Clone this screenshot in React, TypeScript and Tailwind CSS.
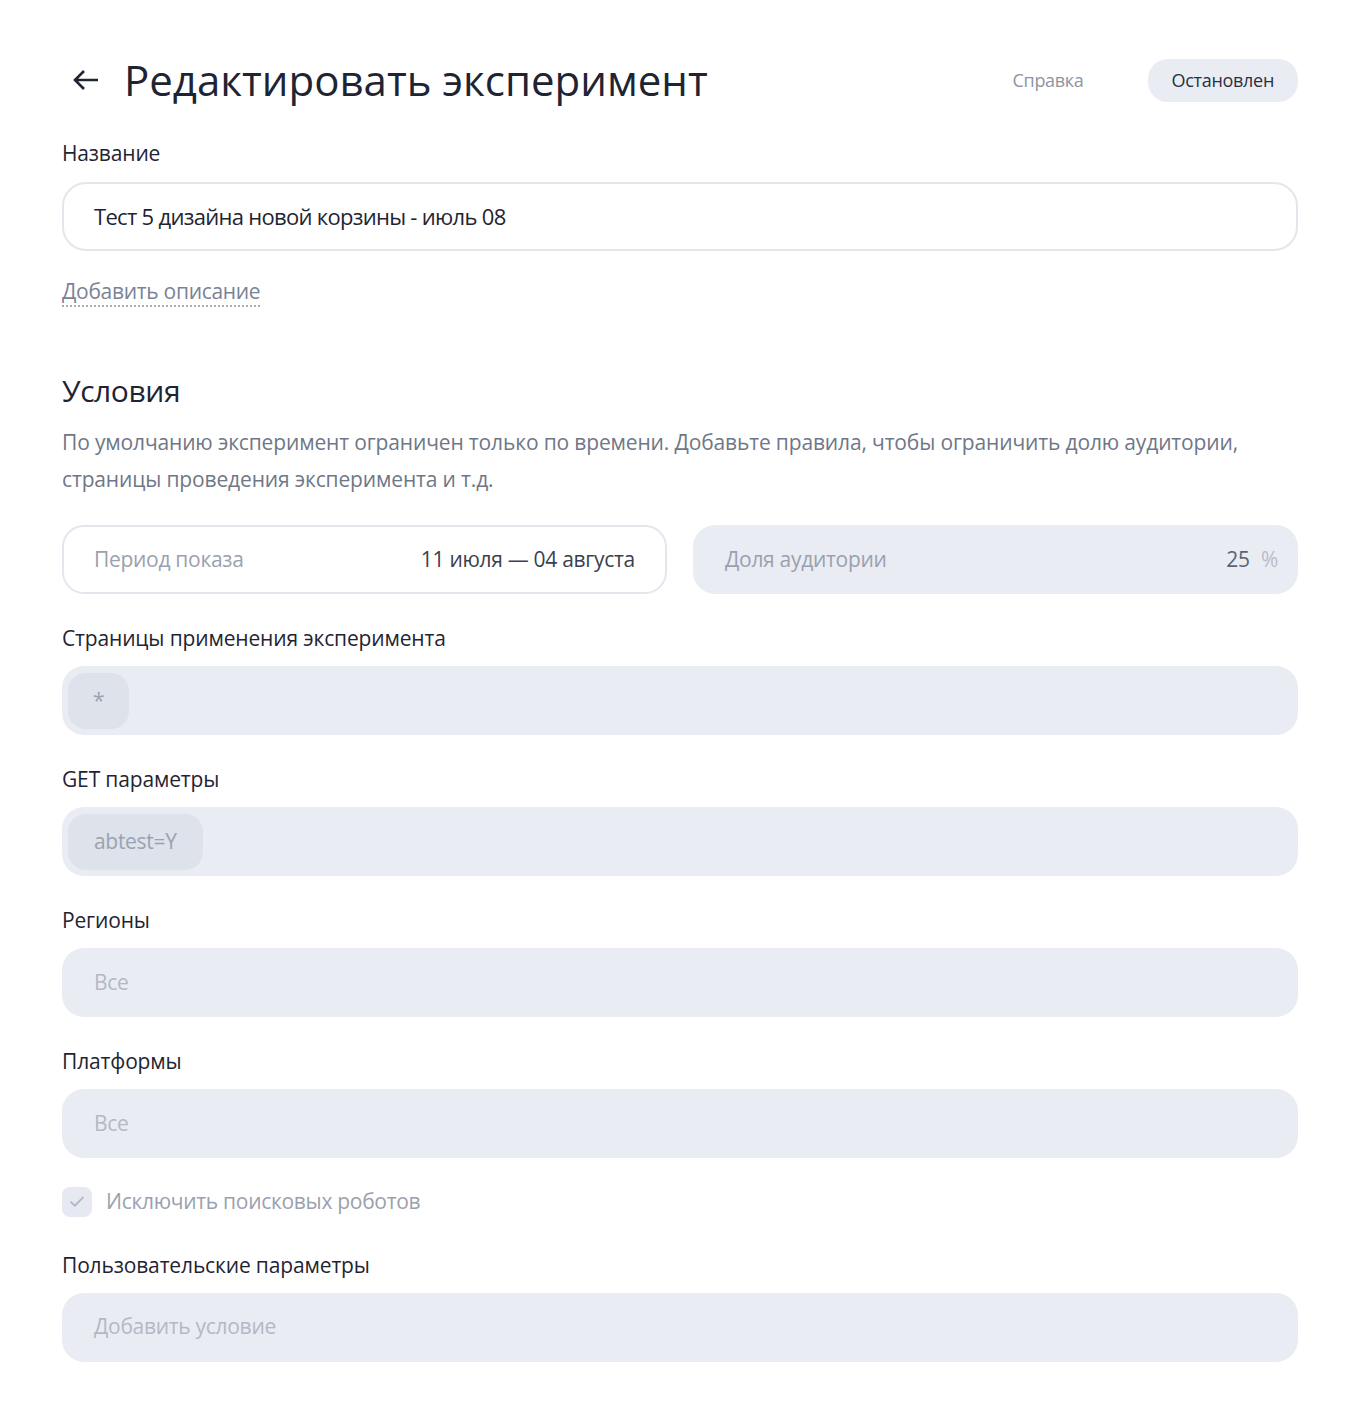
import { Check } from "lucide-react";

const font = { fontFamily: '"Open Sans", "Noto Sans", sans-serif' };

function Label({ children }: { children: React.ReactNode }) {
  return <div className="text-[21px] leading-[28px] tracking-[-0.15px] text-[#1f2433]">{children}</div>;
}

function GrayBox({ children }: { children?: React.ReactNode }) {
  return (
    <div className="flex h-[69px] items-center rounded-[22px] bg-[#e9ecf3] px-[6px] text-[21px] tracking-[-0.3px]">
      {children}
    </div>
  );
}

function Chip({ children }: { children: React.ReactNode }) {
  return (
    <div className="flex h-[56px] items-center rounded-[18px] bg-[#dde2eb] px-[25px] text-[#9aa3b1]">{children}</div>
  );
}

export default function App() {
  return (
    <div className="min-h-[1424px] w-[1360px] bg-white" style={font}>
      <div className="flex flex-col px-[62px] pt-[56px]">
        <div className="flex h-[48px] items-center">
          <svg width="28" height="24" viewBox="0 0 28 24" className="ml-[10px] mr-[24px] text-[#1f2433]">
            <path d="M26 12H3M12 3L3 12l9 9" fill="none" stroke="currentColor" strokeWidth="2.6" />
          </svg>
          <h1 className="text-[42px] leading-[48px] tracking-[0px] text-[#1f2433]">Редактировать эксперимент</h1>
          <div className="ml-auto mr-[64px] text-[18px] tracking-[-0.3px] text-[#8d95a3]">Справка</div>
          <div className="flex h-[43px] items-center rounded-[20px] bg-[#e9ecf3] px-[24px] text-[18px] tracking-[-0.3px] text-[#2b3040]">
            Остановлен
          </div>
        </div>

        <div className="mt-[35px]">
          <Label>Название</Label>
        </div>
        <div className="mt-[15px] flex h-[69px] items-center rounded-[24px] border-2 border-[#e3e6ed] px-[30px] text-[22px] tracking-[-0.7px] text-[#1f2433]">
          Тест 5 дизайна новой корзины - июль 08
        </div>
        <div className="mt-[26px]">
          <span className="border-b-2 border-dotted border-[#a7aebb] text-[21px] leading-[28px] tracking-[-0.3px] text-[#7a8394]">
            Добавить описание
          </span>
        </div>

        <h2 className="mt-[67px] text-[30px] leading-[38px] tracking-[-0.4px] text-[#1f2433]">Условия</h2>
        <p className="mt-[14px] text-[21px] leading-[37px] tracking-[-0.15px] text-[#6f7787]">
          По умолчанию эксперимент ограничен только по времени. Добавьте правила, чтобы ограничить долю аудитории,
          <br />
          страницы проведения эксперимента и т.д.
        </p>

        <div className="mt-[27px] grid grid-cols-2 gap-[26px]">
          <div className="flex h-[69px] items-center justify-between rounded-[22px] border-2 border-[#e3e6ed] px-[30px] text-[21px] tracking-[-0.3px]">
            <span className="text-[#9aa1ae]">Период показа</span>
            <span className="text-[#3a3f4e]">11 июля — 04 августа</span>
          </div>
          <div className="flex h-[69px] items-center justify-between rounded-[22px] bg-[#e9ecf3] px-[32px] pr-[20px] text-[21px] tracking-[-0.3px]">
            <span className="text-[#9aa1ae]">Доля аудитории</span>
            <span className="text-[#5d6474]">
              25 <span className="ml-[6px] text-[#b7bdc8]">%</span>
            </span>
          </div>
        </div>

        <div className="mt-[30px]">
          <Label>Страницы применения эксперимента</Label>
        </div>
        <div className="mt-[14px]">
          <GrayBox>
            <Chip>*</Chip>
          </GrayBox>
        </div>

        <div className="mt-[30px]">
          <Label>GET параметры</Label>
        </div>
        <div className="mt-[14px]">
          <GrayBox>
            <div className="flex h-[56px] items-center rounded-[18px] bg-[#dde2eb] px-[26px] text-[#9aa3b1]">abtest=Y</div>
          </GrayBox>
        </div>

        <div className="mt-[30px]">
          <Label>Регионы</Label>
        </div>
        <div className="mt-[14px]">
          <GrayBox>
            <span className="pl-[26px] text-[#b3b9c4]">Все</span>
          </GrayBox>
        </div>

        <div className="mt-[30px]">
          <Label>Платформы</Label>
        </div>
        <div className="mt-[14px]">
          <GrayBox>
            <span className="pl-[26px] text-[#b3b9c4]">Все</span>
          </GrayBox>
        </div>

        <div className="mt-[28px] flex items-center gap-[14px]">
          <div className="flex h-[30px] w-[30px] items-center justify-center rounded-[8px] bg-[#e6e9f1]">
            <Check size={18} strokeWidth={2.4} className="text-[#b3b9c6]" />
          </div>
          <span className="text-[21px] tracking-[-0.3px] text-[#9aa1ae]">Исключить поисковых роботов</span>
        </div>

        <div className="mt-[33px]">
          <Label>Пользовательские параметры</Label>
        </div>
        <div className="mt-[14px]">
          <GrayBox>
            <span className="pl-[26px] text-[#b3b9c4]">Добавить условие</span>
          </GrayBox>
        </div>
      </div>
    </div>
  );
}
